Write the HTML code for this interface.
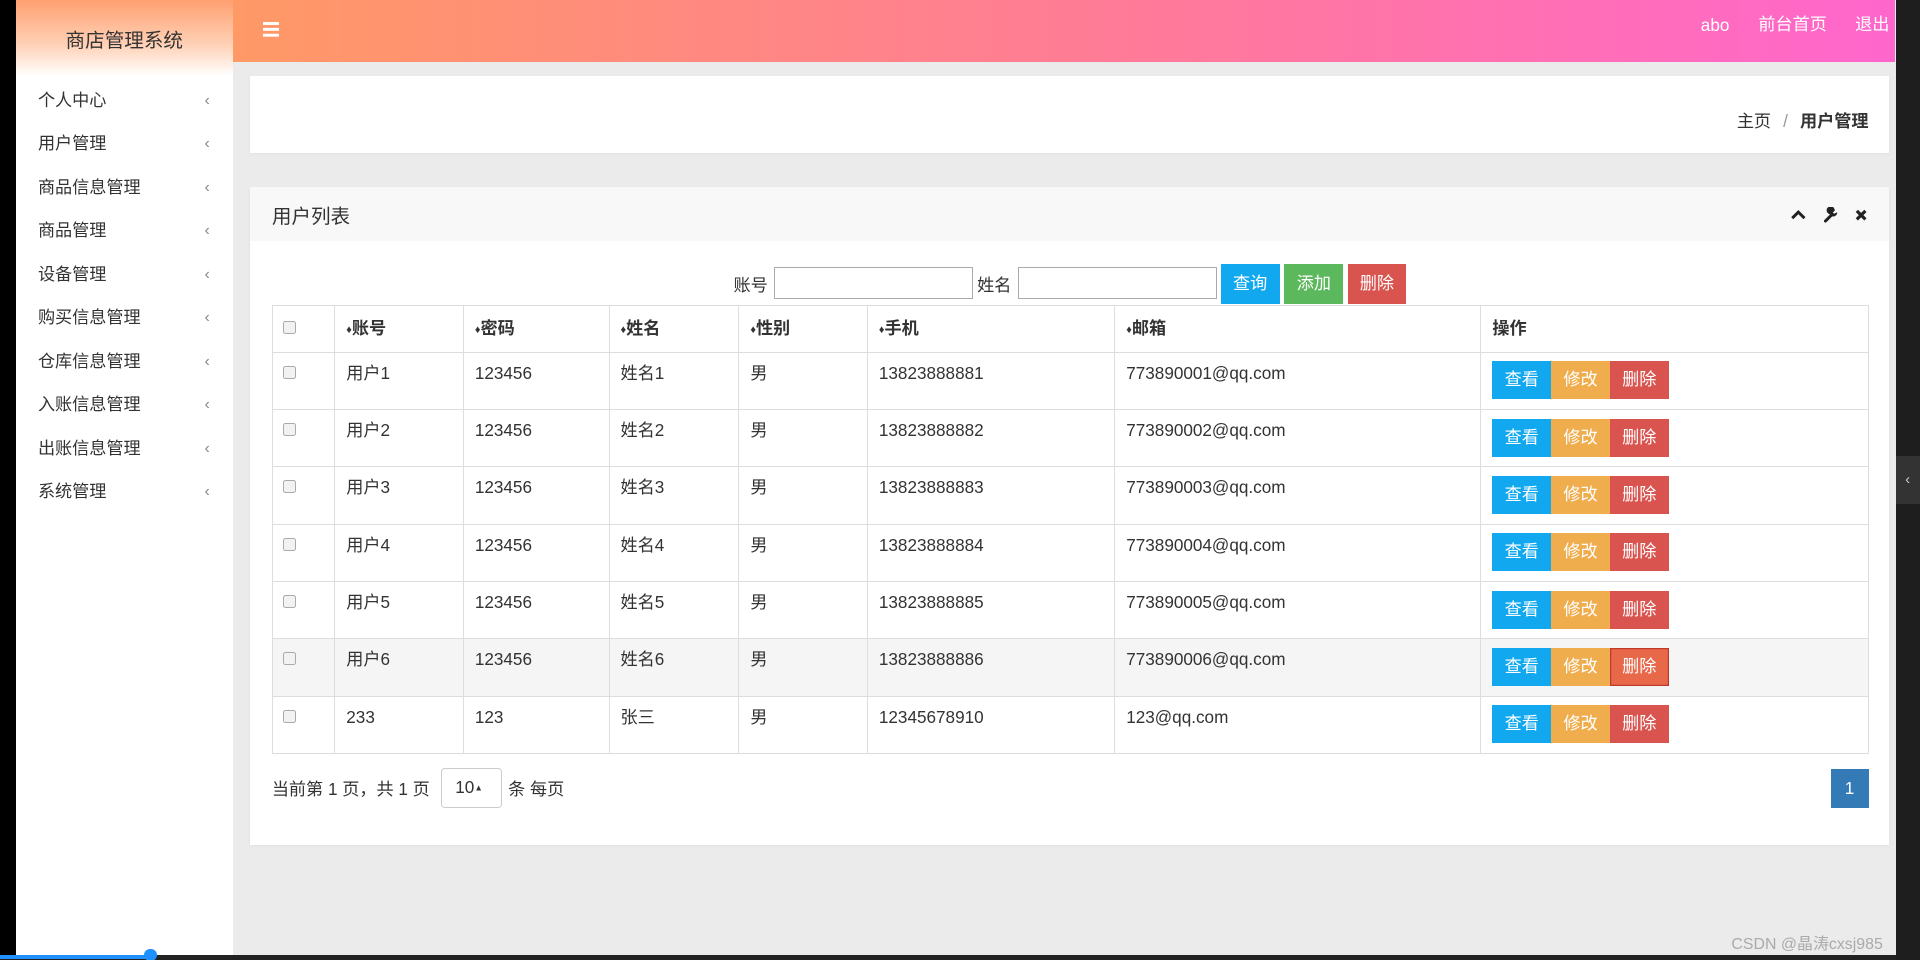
<!DOCTYPE html>
<html><head><meta charset="utf-8">
<style>
html,body{margin:0;padding:0;width:1920px;height:960px;overflow:hidden;background:#000;}
#w{zoom:1.2244898;width:1568px;height:784px;position:relative;font-family:"Liberation Sans","Noto Sans CJK SC",sans-serif;color:#333;background:#ebebeb;overflow:hidden}
.a{position:absolute}
#black{left:0;top:0;width:13px;height:784px;background:#000}
#side{left:13px;top:0;width:177px;height:784px;background:#fff}
#shead{left:0;top:0;width:177px;height:62px;background:linear-gradient(#ffa070,#ffd2b8 60%,#fff);text-align:center;line-height:68px;font-size:16px;color:#333}
.mi{left:18px;font-size:14px;color:#333;line-height:20px}
.ch{left:154px;font-size:13px;color:#888;line-height:20px}
#top{left:190px;top:0;width:1358px;height:51px;background:linear-gradient(90deg,#ff9966,#ff7a99 55%,#ff66cc)}
#top .t{top:10px;color:#fff;font-size:14px;line-height:20px}
#right{left:1548px;top:0;width:20px;height:784px;background:#1e1e1e}
#tab{left:1548px;top:372px;width:20px;height:40px;background:#333;color:#ccc;font-size:12px;text-align:center;line-height:40px}
#bc{left:204px;top:62px;width:1339px;height:63px;background:#fff;box-shadow:0 1px 2px #ddd}
#panel{left:204px;top:153px;width:1339px;height:537px;background:#fff;box-shadow:0 1px 2px #ddd}
#ph{left:0;top:0;width:1339px;height:44px;background:#f8f8f9}
input{position:absolute;border:1px solid #aaa;height:24px;box-sizing:border-box;margin:0;padding:0;background:#fff}
.btn{position:absolute;color:#fff;font-size:14px;text-align:center;line-height:32px;height:32px}
table{position:absolute;left:18px;top:96px;border-collapse:collapse;font-size:14px;color:#333;table-layout:fixed;width:1304px}
td{border:1px solid #ddd;padding:0 0 0 9px;vertical-align:top;overflow:hidden;white-space:nowrap}
tr.h td{height:36px;font-weight:bold;line-height:36px}
tr.r td{height:46px;line-height:34px;padding-top:0}
.cb{display:inline-block;width:9px;height:9px;border:1px solid #aaa;border-radius:2px;background:#f2f2f2;margin-left:-1px}
.s{font-size:9px;vertical-align:1px}
.ops{position:relative;height:46px}
.ops span{position:absolute;top:7px;width:48px;height:31px;line-height:31px;text-align:center;color:#fff;font-size:14px}
</style></head><body><div id="w">
<div class="a" id="black"></div>
<div class="a" id="side">
<div class="a" id="shead">商店管理系统</div>
<div class="a mi" style="top:72px">个人中心</div><div class="a ch" style="top:73px">&lsaquo;</div>
<div class="a mi" style="top:107px">用户管理</div><div class="a ch" style="top:108px">&lsaquo;</div>
<div class="a mi" style="top:143px">商品信息管理</div><div class="a ch" style="top:144px">&lsaquo;</div>
<div class="a mi" style="top:178px">商品管理</div><div class="a ch" style="top:179px">&lsaquo;</div>
<div class="a mi" style="top:214px">设备管理</div><div class="a ch" style="top:215px">&lsaquo;</div>
<div class="a mi" style="top:249px">购买信息管理</div><div class="a ch" style="top:250px">&lsaquo;</div>
<div class="a mi" style="top:285px">仓库信息管理</div><div class="a ch" style="top:286px">&lsaquo;</div>
<div class="a mi" style="top:320px">入账信息管理</div><div class="a ch" style="top:321px">&lsaquo;</div>
<div class="a mi" style="top:356px">出账信息管理</div><div class="a ch" style="top:357px">&lsaquo;</div>
<div class="a mi" style="top:391px">系统管理</div><div class="a ch" style="top:392px">&lsaquo;</div>
</div>
<div class="a" id="top">
<svg class="a" style="left:25px;top:18px" width="13" height="12"><rect y="0" width="13" height="2.4" fill="#fff"/><rect y="4.8" width="13" height="2.4" fill="#fff"/><rect y="9.6" width="13" height="2.4" fill="#fff"/></svg>
<div class="a t" style="left:1199px;top:11px">abo</div>
<div class="a t" style="left:1246px">前台首页</div>
<div class="a t" style="left:1325px">退出</div>
</div>
<div class="a" id="right"></div><div class="a" id="tab">&lsaquo;</div>
<div class="a" id="bc"><div class="a" style="right:17px;top:25px;font-size:14px;color:#333">主页 <span style="color:#999;margin:0 6px">/</span> <b>用户管理</b></div></div>
<div class="a" id="panel">
<div class="a" id="ph"><div class="a" style="left:18px;top:10px;font-size:16px">用户列表</div>
<svg class="a" style="left:1259px;top:18px" width="12" height="9"><path d="M1 7.5 L6 2.5 L11 7.5" stroke="#222" stroke-width="2.4" fill="none"/></svg>
<svg class="a" style="left:1285px;top:16px" width="13" height="13"><path d="M2 11.5 L7 6.5" stroke="#222" stroke-width="2.4" stroke-linecap="round"/><path d="M6 6 A3.3 3.3 0 1 1 9.5 3.3 L8 4.3 L9 5.5 L11.6 4.3 A3.3 3.3 0 0 1 7 7.5 Z" fill="#222"/></svg>
<svg class="a" style="left:1311px;top:18px" width="10" height="10"><path d="M1.5 1.5 L8.5 8.5 M8.5 1.5 L1.5 8.5" stroke="#222" stroke-width="2.6"/></svg>
</div>
<div class="a" style="left:395px;top:68px;font-size:14px">账号</div>
<input style="left:428px;top:65px;width:163px;height:26px">
<div class="a" style="left:594px;top:68px;font-size:14px">姓名</div>
<input style="left:627px;top:65px;width:163px;height:26px">
<div class="btn" style="left:793px;top:63px;width:48px;background:#12a8ef">查询</div>
<div class="btn" style="left:845px;top:63px;width:48px;background:#5cb85c">添加</div>
<div class="btn" style="left:897px;top:63px;width:47px;background:#d9534f">删除</div>
<table>
<colgroup><col style="width:51px"><col style="width:105px"><col style="width:119px"><col style="width:106px"><col style="width:105px"><col style="width:202px"><col style="width:299px"><col style="width:317px"></colgroup>
<tr class="h"><td><span class="cb"></span></td><td><span class="s">&#9830;</span>账号</td><td><span class="s">&#9830;</span>密码</td><td><span class="s">&#9830;</span>姓名</td><td><span class="s">&#9830;</span>性别</td><td><span class="s">&#9830;</span>手机</td><td><span class="s">&#9830;</span>邮箱</td><td>操作</td></tr>
<tr class="r"><td><span class="cb"></span></td><td>用户1</td><td>123456</td><td>姓名1</td><td>男</td><td>13823888881</td><td>773890001@qq.com</td><td><div class="ops"><span style="left:0;background:#12a8ef">查看</span><span style="left:48px;background:#f0ad4e">修改</span><span style="left:96px;background:#d9534f">删除</span></div></td></tr>
<tr class="r"><td><span class="cb"></span></td><td>用户2</td><td>123456</td><td>姓名2</td><td>男</td><td>13823888882</td><td>773890002@qq.com</td><td><div class="ops"><span style="left:0;background:#12a8ef">查看</span><span style="left:48px;background:#f0ad4e">修改</span><span style="left:96px;background:#d9534f">删除</span></div></td></tr>
<tr class="r"><td><span class="cb"></span></td><td>用户3</td><td>123456</td><td>姓名3</td><td>男</td><td>13823888883</td><td>773890003@qq.com</td><td><div class="ops"><span style="left:0;background:#12a8ef">查看</span><span style="left:48px;background:#f0ad4e">修改</span><span style="left:96px;background:#d9534f">删除</span></div></td></tr>
<tr class="r"><td><span class="cb"></span></td><td>用户4</td><td>123456</td><td>姓名4</td><td>男</td><td>13823888884</td><td>773890004@qq.com</td><td><div class="ops"><span style="left:0;background:#12a8ef">查看</span><span style="left:48px;background:#f0ad4e">修改</span><span style="left:96px;background:#d9534f">删除</span></div></td></tr>
<tr class="r"><td><span class="cb"></span></td><td>用户5</td><td>123456</td><td>姓名5</td><td>男</td><td>13823888885</td><td>773890005@qq.com</td><td><div class="ops"><span style="left:0;background:#12a8ef">查看</span><span style="left:48px;background:#f0ad4e">修改</span><span style="left:96px;background:#d9534f">删除</span></div></td></tr>
<tr class="r" style="background:#f5f5f5"><td><span class="cb"></span></td><td>用户6</td><td>123456</td><td>姓名6</td><td>男</td><td>13823888886</td><td>773890006@qq.com</td><td><div class="ops"><span style="left:0;background:#12a8ef">查看</span><span style="left:48px;background:#f0ad4e">修改</span><span style="left:96px;background:#e8684a;box-shadow:inset 0 0 0 1px #c0392b">删除</span></div></td></tr>
<tr class="r"><td><span class="cb"></span></td><td>233</td><td>123</td><td>张三</td><td>男</td><td>12345678910</td><td>123@qq.com</td><td><div class="ops"><span style="left:0;background:#12a8ef">查看</span><span style="left:48px;background:#f0ad4e">修改</span><span style="left:96px;background:#d9534f">删除</span></div></td></tr>
</table>
<div class="a" style="left:18px;top:480px;font-size:14px">当前第 1 页，共 1 页</div>
<div class="a" style="left:156px;top:474px;width:48px;height:31px;border:1px solid #ccc;border-radius:3px;font-size:14px;line-height:31px;text-indent:11px">10<span style="font-size:7px;vertical-align:2px">&#9650;</span></div>
<div class="a" style="left:211px;top:480px;font-size:14px">条 每页</div>
<div class="a" style="left:1291px;top:475px;width:31px;height:32px;background:#337ab7;color:#fff;font-size:14px;text-align:center;line-height:32px">1</div>
</div>
<div class="a" style="left:0;top:780px;width:1548px;height:4px;background:#222"></div>
<div class="a" style="left:0;top:780px;width:123px;height:3px;background:#1e90ff"></div>
<div class="a" style="left:118px;top:775px;width:10px;height:10px;border-radius:50%;background:#1e90ff"></div>
<div class="a" style="left:1414px;top:760px;font-size:13px;color:#aaa">CSDN @晶涛cxsj985</div>
</div></body></html>
